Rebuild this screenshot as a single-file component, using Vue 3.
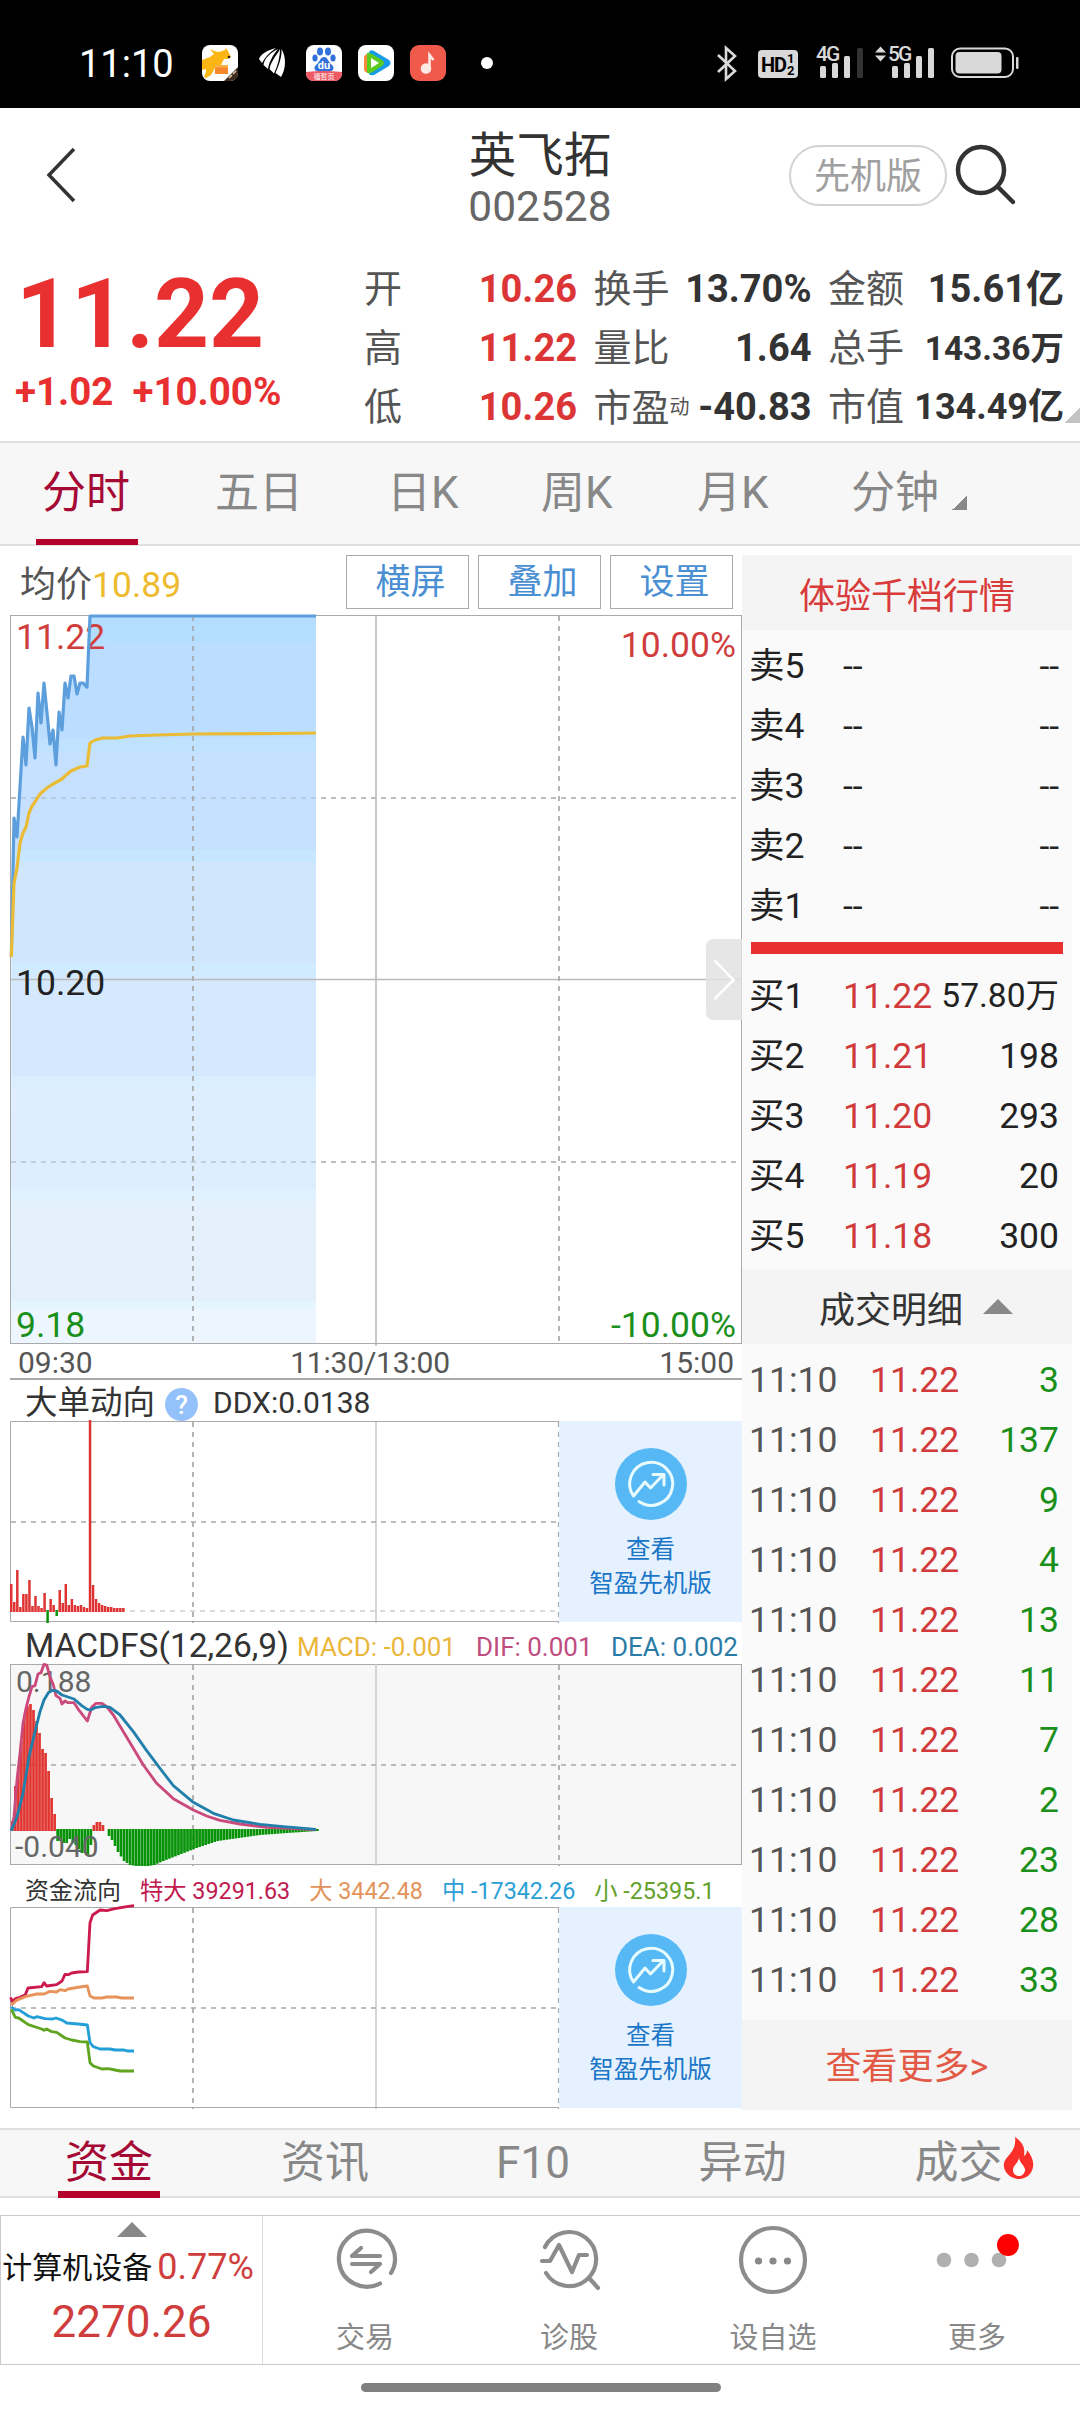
<script setup>
import { computed } from 'vue';

// Header figures, three columns of label / value
const stats = [
    { label: '开', value: '10.26', tone: 'up' },
    { label: '换手', value: '13.70%' },
    { label: '金额', value: '15.61亿' },
    { label: '高', value: '11.22', tone: 'up' },
    { label: '量比', value: '1.64' },
    { label: '总手', value: '143.36万', size: 'small' },
    { label: '低', value: '10.26', tone: 'up' },
    { label: '市盈', sup: '动', value: '-40.83' },
    { label: '市值', value: '134.49亿', size: 'mid' },
];

const periods = ['分时', '五日', '日K', '周K', '月K', '分钟'];
const tools = ['横屏', '叠加', '设置'];

const sells = ['卖5', '卖4', '卖3', '卖2', '卖1'];
const buys = [
    { label: '买1', price: '11.22', volume: '57.80万' },
    { label: '买2', price: '11.21', volume: '198' },
    { label: '买3', price: '11.20', volume: '293' },
    { label: '买4', price: '11.19', volume: '20' },
    { label: '买5', price: '11.18', volume: '300' },
];
const trades = [3, 137, 9, 4, 13, 11, 7, 2, 23, 28, 33];

const infoTabs = ['资金', '资讯', 'F10', '异动', '成交'];

// Price area: x / y pairs in chart pixels
const priceLine = '11.3,957 14,818 17,837 20,787 23,737 26,765 29,708 32,727 35,758 38,693 41,723 44,683 47,713 50,744 53,730 56,765 59,712 62,730 65,683 68,698 71,676 74,676 77,694 80,683 83,683 87,687 90,616 316,616';
const averageLine = '11.3,957 14,883 17,868 20,843 23,833 26,827 29,813 32,806 35,802 38,797 41,793 47,788 53,784 62,779 65,776 71,771 80,767 87,766 90,743 95,740 103,738 117,738 130,736 157,735 193,734 280,733.5 316,733';
const priceArea = computed(() => `${priceLine} 316,1343 11,1343`);

const bands = [
    { y: 616, color: '#b4deff' },
    { y: 642, color: '#bbddff' },
    { y: 738, color: '#bfe3ff' },
    { y: 752, color: '#c5e1ff' },
    { y: 850, color: '#c6e7ff' },
    { y: 862, color: '#d0e6fd' },
    { y: 963, color: '#d0eaff' },
    { y: 975, color: '#d5e9fe' },
    { y: 1076, color: '#d9efff' },
    { y: 1088, color: '#deeefe' },
    { y: 1189, color: '#e0f2ff' },
    { y: 1201, color: '#e4f1fd' },
    { y: 1301, color: '#e6f6ff' },
    { y: 1309, color: '#edf6ff' },
    { y: 1343, color: '#edf6ff' },
];
const bandRects = computed(() => bands.slice(0, -1).map((b, i) => ({ ...b, height: bands[i + 1].y - b.y })));

// Big order bars, one per minute
const ddx = [28, 10, 42, 5, 18, 18, 32, 6, 16, 6, 4, 19, -11, 13, 7, -4, 22, 9, 28, 7, 13, 7, 6, 7, 5, 4, 192, 27, 13, 9, 7, 6, 5, 5, 4, 4, 4, 4];

// MACD histogram: opening minutes are listed, the long green tail is interpolated
const macdHead = [10, 45, 65, 90, 116, 125, 127, 121, 110, 98, 82, 78, 60, 33, 17, -12, -12, -14, -14, -10, -14, -16, -20, -24, -24, -26, -16, 6, 9, 9, 6, 0];
const macdTail = [[32, -7], [33, -11], [35, -23], [37, -32], [39, -36], [41, -37], [45, -37], [47, -36], [50, -32], [56, -25], [61, -19], [68, -12], [75, -9], [82, -6], [91, -4], [101, -2]];

const interpolate = (points, x) => {
    const i = Math.max(points.findIndex((p) => p[0] >= x), 1);
    const [x0, y0] = points[i - 1];
    const [x1, y1] = points[i];
    return y0 + ((y1 - y0) * (x - x0)) / (x1 - x0);
};

const macdBars = computed(() => {
    const bars = [...macdHead];
    for (let m = 32; m <= 101; m++) {
        bars.push(interpolate(macdTail, m));
    }
    return bars.map((v, i) => ({ x: 11 + i * 3.02, v }));
});

// Lines below are sampled at three units per pixel
const dif = '34,632 42,590 51,480 60,400 69,310 78,265 87,230 96,200 105,197 114,162 123,158 132,133 140,135 150,170 160,195 168,227 180,235 186,252 195,243 204,248 222,248 235,268 262,303 275,262 288,250 306,250 320,260 340,285 400,385 430,435 470,490 520,536 580,570 620,588 660,601 720,612 800,622 948,629';
const dea = '34,632 51,590 69,520 87,410 105,335 120,275 132,240 145,218 157,211 170,213 186,225 222,237 245,257 262,268 272,270 285,263 310,259 330,262 360,285 400,335 440,392 480,445 520,497 580,547 640,580 700,600 780,613 850,620 948,628';

const flows = [
    { color: '#cc1a4f', points: '32,412 36,424 48,415 60,412 76,404 84,384 125,380 132,368 140,378 170,374 186,363 195,343 205,344 215,339 235,336 262,335 270,188 278,165 300,150 320,152 345,146 385,139 402,137' },
    { color: '#e8935a', points: '34,436 48,422 76,410 110,402 132,402 150,394 170,396 180,389 195,392 204,387 240,381 262,378 270,408 282,414 306,414 320,411 350,411 365,414 402,414' },
    { color: '#239fd8', points: '34,440 44,450 56,449 85,468 102,474 110,470 135,476 158,477 168,474 188,481 200,489 235,492 262,495 270,548 280,560 300,567 330,567 345,570 370,570 382,573 402,573' },
    { color: '#5fa51f', points: '34,448 46,472 56,474 85,494 125,507 132,511 140,507 155,515 170,517 195,534 215,540 240,545 262,546 270,608 280,618 306,627 325,626 345,630 360,633 402,633' },
];
</script>

<template>
    <div class="page">
        <!-- System status bar -->
        <div class="status">
            <span class="clock">11:10</span>
            <svg class="app-icon" viewBox="0 0 36 36">
                <rect width="36" height="36" rx="8" fill="#fff" />
                <path d="M8 4q6 3 9 3l6-2 1-2 2 3 3 6-3 2-4 0-3 6 2 3H13l-4 7-5 3-2-1 2-5 0-3-4 1V15l8-3 4-3z" fill="#fbb615" />
                <rect x="13" y="21" width="13" height="8" fill="#f5892b" />
                <rect x="13" y="20" width="13" height="2.500" fill="#fbb040" />
                <circle cx="27" cy="12" r="1.300" fill="#222" />
                <path d="M36 22v6q0 8-8 8h-6z" fill="#3f2a20" />
                <path d="M27 33l3-3M31 29l3-3" stroke="#d8c8a8" stroke-width="1.600" />
            </svg>
            <svg class="app-icon" viewBox="0 0 36 36">
                <g fill="#fff">
                    <path d="M22 3C13 5 6 10 5 14L8 18C11 12 16 7 22 3z" />
                    <path d="M24 4C16 8 10 14 9.500 20L14 24C15 17 19 10 24 4z" />
                    <path d="M26 4C23 10 17 16 15.500 24L20 28.500C24 20 26 12 26 4z" />
                    <path d="M27.500 4C28 12 25 20 21.500 28L27 32C32 24 32.500 12 27.500 4z" />
                </g>
            </svg>
            <svg class="app-icon" viewBox="0 0 36 36">
                <rect width="36" height="36" rx="8" fill="#fff" />
                <g fill="#3270db">
                    <ellipse cx="14" cy="6.500" rx="3" ry="4" />
                    <ellipse cx="22" cy="6.500" rx="3" ry="4" />
                    <ellipse cx="9" cy="13" rx="2.600" ry="3.600" />
                    <ellipse cx="27" cy="13" rx="2.600" ry="3.600" />
                    <path d="M18 12c4 0 4 5 8 8 4 4 0 8-8 7-8 1-12-3-8-7 4-3 4-8 8-8z" />
                </g>
                <text x="18" y="24" class="du">du</text>
                <path d="M0 27q18-2 36 0v1q0 8-8 8H8q-8 0-8-8z" fill="#ee5a63" />
                <text x="18" y="34" class="promo">福哲页</text>
            </svg>
            <svg class="app-icon" viewBox="0 0 36 36">
                <rect width="36" height="36" rx="8" fill="#fff" />
                <path d="M11 7q1-3 5-1l15 9q3 3 0 6l-15 9q-4 1-5-1z" fill="#169be8" />
                <path d="M6 12q1-3 4-3v19q-4-1-4-4z" fill="#f9873c" />
                <path d="M9 8q1-1 5 1l10 6q4 3 0 6l-11 7q-4 1-4-1z" fill="#5bcb1f" />
                <path d="M13 13l8 5-8 5z" fill="#fff" />
            </svg>
            <svg class="app-icon" viewBox="0 0 36 36">
                <rect width="36" height="36" rx="9" fill="#ef5a4b" />
                <circle cx="16" cy="23.500" r="5.300" fill="#ffe9e4" />
                <path d="M19.500 24V10l4 5" fill="none" stroke="#ffe9e4" stroke-width="2.600" />
            </svg>
            <i class="more-dot"></i>
            <svg class="signals" viewBox="712 44 308 38">
                <path d="M718 55l17 16-9 8V48l9 8-17 16" fill="none" stroke="#d9d9d9" stroke-width="2.600" />
                <rect x="758" y="50" width="40" height="28" rx="4" fill="#d9d9d9" />
                <text x="761" y="72" class="hd">HD</text>
                <text x="787" y="63" class="hd-sub">1</text>
                <text x="787" y="75" class="hd-sub">2</text>
                <g fill="#d9d9d9">
                    <text x="816" y="61" class="net">4G</text>
                    <text x="888" y="61" class="net">5G</text>
                    <rect x="820" y="66" width="6" height="12" rx="1.500" />
                    <rect x="832" y="63" width="6" height="15" rx="1.500" />
                    <rect x="844" y="56" width="6" height="22" rx="1.500" />
                    <rect x="857" y="48" width="6" height="30" rx="1.500" fill="#333" />
                    <path d="M875 52.500l5.500-6 5.500 6zM875 55.500l5.500 6 5.500-6z" />
                    <rect x="892" y="66" width="6" height="12" rx="1.500" />
                    <rect x="904" y="63" width="6" height="15" rx="1.500" />
                    <rect x="916" y="56" width="6" height="22" rx="1.500" />
                    <rect x="928" y="48" width="6" height="30" rx="1.500" />
                    <rect x="955.500" y="52" width="46" height="21.500" rx="4" />
                    <rect x="1016" y="57" width="2.500" height="12" rx="1" />
                </g>
                <rect x="952" y="48.500" width="61" height="28.500" rx="8" fill="none" stroke="#d9d9d9" stroke-width="2" />
            </svg>
        </div>

        <!-- Title bar -->
        <header class="header">
            <svg class="back" viewBox="0 0 32 60">
                <path d="M29 4L4 30l25 26" />
            </svg>
            <div class="stock">
                <div class="stock-name">英飞拓</div>
                <div class="stock-code">002528</div>
            </div>
            <div class="header-right">
                <span class="pill">先机版</span>
                <svg class="search" viewBox="0 0 60 60">
                    <circle cx="25" cy="25" r="23" />
                    <path d="M42 42l15 15" />
                </svg>
            </div>
        </header>

        <!-- Quote summary -->
        <section class="quote">
            <div class="quote-main">
                <div class="price">11.22</div>
                <div class="change"><span>+1.02</span><span>+10.00%</span></div>
            </div>
            <div class="stats">
                <div v-for="(s, i) in stats" :key="i" class="stat">
                    <span class="stat-label">{{ s.label }}<small v-if="s.sup">{{ s.sup }}</small></span>
                    <span class="stat-value" :class="[s.tone, s.size]">{{ s.value }}</span>
                </div>
            </div>
            <i class="corner"></i>
        </section>

        <nav class="periods">
            <span v-for="(p, i) in periods" :key="p" class="period" :class="['period--' + i, { active: i === 0 }]">{{ p }}</span>
            <i class="corner-mark"></i>
        </nav>

        <main class="main">
            <div class="charts">
                <div class="toolbar">
                    <span class="avg">均价<b>10.89</b></span>
                    <span v-for="t in tools" :key="t" class="tool">{{ t }}</span>
                </div>

                <svg class="chart-main" viewBox="0 612 742 736">
                    <clipPath id="area">
                        <polygon :points="priceArea" />
                    </clipPath>
                    <path d="M11 798H741M11 1162H741" class="dash" />
                    <path d="M11 979.500H741M376 615V1346" class="axis" />
                    <g clip-path="url(#area)">
                        <rect v-for="b in bandRects" :key="b.y" x="11" :y="b.y" width="305" :height="b.height" :fill="b.color" />
                        <path d="M11 798H316M11 1162H316" class="dash faint" />
                        <path d="M11 979.500H316" class="axis" />
                    </g>
                    <path d="M193 616V1343M559 616V1343" class="dash" />
                    <rect x="10.500" y="615.500" width="731" height="728" class="frame" />
                    <text x="16" y="649" class="tick up">11.22</text>
                    <text x="736" y="657" class="tick up end">10.00%</text>
                    <text x="16" y="995" class="tick">10.20</text>
                    <text x="16" y="1337" class="tick down">9.18</text>
                    <text x="736" y="1337" class="tick down end">-10.00%</text>
                    <polyline :points="priceLine" class="line price-line" />
                    <polyline :points="averageLine" class="line avg-line" />
                    <path d="M742 939H714q-8 0-8 8v65q0 8 8 8h28z" class="handle" />
                    <path d="M715 961l18.500 19L715 998.500" class="handle-arrow" />
                </svg>
                <div class="times"><span>09:30</span><span class="noon">11:30/13:00</span><span>15:00</span></div>

                <div class="caption caption--ddx">
                    <span class="cap-title">大单动向</span>
                    <i class="help">?</i>
                    <span class="cap-ddx">DDX:0.0138</span>
                </div>
                <div class="panel">
                    <svg class="plot" viewBox="0 1418 559 208">
                        <path d="M376 1421V1623" class="axis light" />
                        <path d="M11 1522H559M193 1422V1623" class="dash" />
                        <path d="M130 1611H559" class="dash pale" />
                        <path d="M559 1421.500H10.500V1621.500H559" class="frame" />
                        <path d="M558.500 1422V1623" class="dash long" />
                        <rect v-for="(v, i) in ddx" :key="i" :x="10 + i * 3.030" :y="v > 0 ? 1612 - v : 1610" width="2.500" :height="Math.abs(v) + (v > 0 ? 0 : 2)" :fill="v > 0 ? '#dd3333' : '#0a930a'" />
                    </svg>
                    <div class="cta">
                        <svg viewBox="0 0 72 72">
                            <circle cx="36" cy="36" r="36" class="cta-disc" />
                            <path d="M18.500 48A21.500 21.500 0 1 1 24 53.500M18.500 48L30 34l5.500 6L48 27M38 26.500h11v10.500" class="cta-glyph" />
                        </svg>
                        <span>查看</span>
                        <span>智盈先机版</span>
                    </div>
                </div>

                <div class="caption caption--macd">
                    <span class="cap-macd">MACDFS(12,26,9)</span>
                    <span class="c-macd">MACD: -0.001</span>
                    <span class="c-dif">DIF: 0.001</span>
                    <span class="c-dea">DEA: 0.002</span>
                </div>
                <svg class="plot wide" viewBox="0 1660 742 209">
                    <rect x="10.500" y="1664.500" width="731" height="200" class="frame shaded" />
                    <path d="M376 1664V1866" class="axis light" />
                    <path d="M11 1765H741M193 1665V1866M559 1665V1866" class="dash" />
                    <rect v-for="(b, i) in macdBars" :key="i" :x="b.x" :y="b.v > 0 ? 1831 - b.v : 1829" width="2.700" :height="Math.abs(b.v)" :fill="b.v > 0 ? '#e03530' : '#079307'" />
                    <text x="16" y="1692" class="tick gray">0.188</text>
                    <text x="15" y="1857" class="tick gray">-0.040</text>
                    <g transform="translate(0 1620) scale(0.33333)" class="fine">
                        <polyline :points="dif" stroke="#cb4a7c" />
                        <polyline :points="dea" stroke="#207fab" />
                    </g>
                </svg>

                <div class="caption caption--flow">
                    <span class="f-title">资金流向</span>
                    <span class="f-xl">特大 39291.63</span>
                    <span class="f-l">大 3442.48</span>
                    <span class="f-m">中 -17342.26</span>
                    <span class="f-s">小 -25395.1</span>
                </div>
                <div class="panel">
                    <svg class="plot" viewBox="0 1904 559 208">
                        <path d="M376 1907V2109" class="axis light" />
                        <path d="M11 2008H559M193 1908V2109" class="dash" />
                        <path d="M559 1907.500H10.500V2107.500H559" class="frame" />
                        <path d="M558.500 1908V2109" class="dash long" />
                        <g transform="translate(0 1860) scale(0.33333)" class="fine">
                            <polyline v-for="f in flows" :key="f.color" :points="f.points" :stroke="f.color" />
                        </g>
                    </svg>
                    <div class="cta">
                        <svg viewBox="0 0 72 72">
                            <circle cx="36" cy="36" r="36" class="cta-disc" />
                            <path d="M18.500 48A21.500 21.500 0 1 1 24 53.500M18.500 48L30 34l5.500 6L48 27M38 26.500h11v10.500" class="cta-glyph" />
                        </svg>
                        <span>查看</span>
                        <span>智盈先机版</span>
                    </div>
                </div>
            </div>

            <!-- Order book -->
            <aside class="book">
                <div class="book-head promo-head">体验千档行情</div>
                <div class="rows">
                    <div v-for="s in sells" :key="s" class="row">
                        <span>{{ s }}</span><span class="empty">--</span><span class="qty">--</span>
                    </div>
                </div>
                <div class="ratio"></div>
                <div class="rows">
                    <div v-for="b in buys" :key="b.label" class="row">
                        <span>{{ b.label }}</span><span class="row-price">{{ b.price }}</span>
                        <span class="qty" :class="{ long: b.volume.length > 5 }">{{ b.volume }}</span>
                    </div>
                </div>
                <div class="book-head detail-head">成交明细<i class="tri"></i></div>
                <div class="rows rows--trades">
                    <div v-for="(q, i) in trades" :key="i" class="row trade">
                        <span>11:10</span><span class="row-price">11.22</span><span class="qty">{{ q }}</span>
                    </div>
                </div>
                <div class="book-more">查看更多&gt;</div>
            </aside>
        </main>

        <nav class="info-tabs">
            <span v-for="(t, i) in infoTabs" :key="t" class="info-tab" :class="{ active: i === 0, hot: i === 4 }">
                {{ t }}
                <svg v-if="i === 4" class="flame" viewBox="0 0 30 42">
                    <path d="M11 0c9 6 10 12 9 19 2-1 3-4 3-6 5 6 7 12 6 17-1 7-7 12-14 12S1 37 0 30c-1-6 3-9 6-13 4-5 6-10 5-17z" fill="#fb2f2a" />
                    <path d="M15 20c0 6 7 9 6 14-1 3-3 5-6 5s-6-2-6-6c0-5 6-7 6-13z" fill="#fff" />
                </svg>
            </span>
        </nav>

        <footer class="bottom">
            <div class="sector">
                <i class="tri"></i>
                <div class="sector-line"><span>计算机设备</span><b>0.77%</b></div>
                <div class="sector-index">2270.26</div>
            </div>
            <div class="action">
                <svg viewBox="0 0 76 76">
                    <path d="M64 51A28 28 0 1 0 53 61.500" />
                    <path d="M25 34h28M25 34l9-8M53 42H25M53 42l-9 8" />
                </svg>
                <span>交易</span>
            </div>
            <div class="action">
                <svg viewBox="0 0 76 76">
                    <path d="M14 25A27 27 0 1 1 15 51" />
                    <path d="M11 39h8l9-16 13 27 7-17h8M59 57l8 9" />
                </svg>
                <span>诊股</span>
            </div>
            <div class="action">
                <svg viewBox="0 0 76 76">
                    <circle cx="38" cy="38" r="32" />
                    <g class="solid">
                        <circle cx="23.500" cy="39" r="3.600" />
                        <circle cx="38" cy="39" r="3.600" />
                        <circle cx="52.500" cy="39" r="3.600" />
                    </g>
                </svg>
                <span>设自选</span>
            </div>
            <div class="action">
                <svg viewBox="0 0 76 76">
                    <g class="solid pale">
                        <circle cx="5" cy="38" r="7.300" />
                        <circle cx="32.500" cy="38" r="7.300" />
                        <circle cx="60" cy="38" r="7.300" />
                    </g>
                    <circle cx="69" cy="23" r="11" class="badge" />
                </svg>
                <span>更多</span>
            </div>
        </footer>
        <div class="home-bar"></div>
    </div>
</template>

<style>
body {
    margin: 0;
    background: #fff;
}
</style>

<style scoped>
.page {
    width: 1080px;
    height: 2412px;
    overflow: hidden;
    background: #fff;
    font-family: Roboto, "Noto Sans CJK SC", sans-serif;
    color: #333;
    white-space: nowrap;
}

i,
b {
    font-style: normal;
    font-weight: 400;
}

svg {
    display: block;
    overflow: visible;
    flex: none;
}

/* Status bar */
.status {
    display: flex;
    align-items: center;
    height: 108px;
    padding: 18px 60px 0 79px;
    box-sizing: border-box;
    background: #000;
}

.clock {
    width: 123px;
    padding-top: 2px;
    font-size: 38px;
    line-height: 44px;
    color: #fff;
}

.app-icon {
    width: 36px;
    height: 36px;
    margin-right: 16px;
}

.du {
    font-size: 11px;
    font-weight: 700;
    fill: #fff;
    text-anchor: middle;
}

.promo {
    font-size: 7px;
    fill: #fff;
    text-anchor: middle;
}

.more-dot {
    width: 12px;
    height: 12px;
    margin-left: 19px;
    border-radius: 50%;
    background: #fff;
}

.signals {
    width: 308px;
    height: 38px;
    margin-left: auto;
}

.hd {
    font-size: 20px;
    font-weight: 700;
    letter-spacing: -1px;
    fill: #000;
}

.hd-sub {
    font-size: 13px;
    font-weight: 700;
    fill: #000;
}

.net {
    font-size: 21px;
    font-weight: 500;
    letter-spacing: -2px;
}

/* Title bar */
.header {
    display: grid;
    grid-template-columns: 1fr auto 1fr;
    align-items: start;
    height: 134px;
    padding: 0 64px 0 45px;
}

.back {
    width: 32px;
    height: 60px;
    margin-top: 37px;
    fill: none;
    stroke: #333;
    stroke-width: 3.500;
}

.stock {
    padding: 20px 0 0 19px;
    text-align: center;
}

.stock-name {
    font-size: 47.500px;
    line-height: 56px;
}

.stock-code {
    font-size: 42.500px;
    line-height: 46px;
    color: #666;
}

.header-right {
    display: flex;
    justify-content: flex-end;
    margin-top: 37px;
}

.pill {
    width: 154px;
    height: 57px;
    margin-right: 9px;
    border: 2px solid #d2d2d2;
    border-radius: 31px;
    font-size: 36px;
    line-height: 60px;
    text-align: center;
    color: #a0a0a0;
}

.search {
    width: 60px;
    height: 60px;
    fill: none;
    stroke: #333;
    stroke-width: 4.500;
    stroke-linecap: round;
}

/* Quote summary */
.quote {
    position: relative;
    display: flex;
    height: 199px;
}

.quote-main {
    width: 364px;
    color: #e83030;
}

.price {
    padding: 17px 0 0 16px;
    font-size: 96px;
    font-weight: 700;
    line-height: 110px;
}

.change {
    display: flex;
    gap: 19px;
    padding: 0 0 0 15px;
    font-size: 38.500px;
    font-weight: 700;
    line-height: 46px;
}

.stats {
    display: grid;
    grid-template-columns: 213px 218px 236px;
    grid-auto-rows: 59px;
    column-gap: 16.500px;
    padding-top: 18px;
}

.stat {
    display: flex;
    justify-content: space-between;
    line-height: 59px;
}

.stat-label {
    font-size: 38px;
    color: #555;
}

.stat-label small {
    font-size: 20px;
    vertical-align: 7px;
}

.stat-value {
    font-size: 38px;
    font-weight: 700;
}

.stat-value.mid {
    font-size: 36px;
}

.stat-value.small {
    font-size: 33.500px;
}

.stat-value.up {
    color: #dc3535;
}

.corner {
    position: absolute;
    right: 0;
    bottom: 18px;
    width: 15px;
    height: 15px;
    background: linear-gradient(135deg, transparent 50%, #c4c4c4 50%);
}

/* Period tabs */
.periods {
    display: flex;
    box-sizing: border-box;
    height: 105px;
    padding-left: 36px;
    border-top: 2px solid #e0e0e0;
    border-bottom: 2px solid #e0e0e0;
    background: #f7f7f7;
}

.period {
    box-sizing: border-box;
    height: 102px;
    padding-left: 7px;
    font-size: 44px;
    line-height: 100px;
    color: #888;
}

.period--0 {
    width: 172px;
}

.period--1 {
    width: 172px;
}

.period--2 {
    width: 154px;
}

.period--3 {
    width: 156px;
}

.period--4 {
    width: 154px;
}

.period.active {
    width: 102px;
    margin-right: 70px;
    padding-left: 6px;
    border-bottom: 6px solid #b5002c;
    border-radius: 4px 4px 0 0;
    color: #a50a35;
}

.corner-mark {
    width: 15px;
    height: 15px;
    margin: 52px 0 0 13px;
    background: linear-gradient(135deg, transparent 50%, #888 50%);
}

/* Charts column */
.main {
    display: flex;
    height: 1582px;
}

.charts {
    width: 742px;
}

.toolbar {
    display: flex;
    align-items: center;
    height: 66px;
    padding-bottom: 3px;
    margin-bottom: -3px;
    box-sizing: border-box;
}

.avg {
    width: 326px;
    padding: 14px 0 0 20px;
    font-size: 36px;
    line-height: 44px;
    color: #555;
}

.avg b {
    font-size: 35.500px;
    color: #eebb2e;
}

.tool {
    box-sizing: border-box;
    width: 123px;
    height: 54px;
    margin: 9px 9px 0 0;
    padding-left: 6px;
    border: 1px solid #aaa;
    font-size: 35px;
    line-height: 54px;
    text-align: center;
    color: #4b8fd3;
}

.chart-main {
    width: 742px;
    height: 736px;
    margin-top: 3px;
}

.frame {
    fill: none;
    stroke: #aaa;
    stroke-width: 1;
}

.shaded {
    fill: #f7f7f7;
}

.axis {
    stroke: #bbb;
    stroke-width: 1.600;
}

.axis.light {
    stroke: #ccc;
}

.dash {
    fill: none;
    stroke: #a8a8a8;
    stroke-width: 1.700;
    stroke-dasharray: 5 5;
}

.dash.faint {
    stroke: #b3c4d6;
}

.dash.pale {
    stroke: #d0d0d0;
}

.dash.long {
    stroke-width: 1.200;
}

.line {
    fill: none;
    stroke-linejoin: round;
}

.price-line {
    stroke: #5d9fdd;
    stroke-width: 3.200;
}

.avg-line {
    stroke: #eabb35;
    stroke-width: 3.200;
}

.tick {
    font-size: 35.500px;
    fill: #222;
}

.tick.end {
    text-anchor: end;
}

.tick.up {
    fill: #cf3d3d;
}

.tick.down {
    fill: #1a8f1a;
}

.tick.gray {
    font-size: 30px;
    fill: #666;
}

.handle {
    fill: #e2e2e2;
    opacity: 0.85;
}

.handle-arrow {
    fill: none;
    stroke: #fff;
    stroke-width: 2.500;
    stroke-linecap: round;
}

.times {
    display: flex;
    justify-content: space-between;
    height: 30px;
    margin-left: 10px;
    padding: 0 8px;
    border-bottom: 2px solid #aaa;
    font-size: 30px;
    line-height: 30px;
    color: #555;
}

.noon {
    padding-right: 12px;
    letter-spacing: -0.200px;
}

.caption {
    display: flex;
    box-sizing: border-box;
    padding-left: 25px;
}

.caption--ddx {
    height: 38px;
    align-items: center;
    padding-top: 7px;
    line-height: 30px;
}

.cap-title {
    font-size: 32.500px;
}

.help {
    width: 33px;
    height: 33px;
    margin: 3px 15px 0 10px;
    border-radius: 50%;
    background: #95c1fb;
    font-size: 26px;
    font-weight: 500;
    line-height: 34px;
    text-align: center;
    color: #fff;
}

.cap-ddx {
    font-size: 30px;
}

.panel {
    display: flex;
    height: 208px;
}

.plot {
    width: 559px;
    height: 208px;
}

.plot.wide {
    width: 742px;
    height: 209px;
}

.fine {
    fill: none;
    stroke-width: 8.500;
    stroke-linejoin: round;
}

.cta {
    display: flex;
    flex-direction: column;
    align-items: center;
    box-sizing: border-box;
    width: 183px;
    height: 201px;
    margin-top: 3px;
    padding-top: 27px;
    background: #e5f1fe;
    font-size: 24.500px;
    line-height: 34px;
    color: #1a76c8;
}

.cta svg {
    width: 72px;
    height: 72px;
    margin-bottom: 13px;
}

.cta-disc {
    fill: #56b8f5;
}

.cta-glyph {
    fill: none;
    stroke: #e8fcff;
    stroke-width: 3;
    stroke-linecap: round;
    stroke-linejoin: round;
}

.caption--macd {
    height: 34px;
    padding-top: 4px;
    font-size: 26px;
    line-height: 34px;
}

.cap-macd {
    width: 272px;
    font-size: 33.500px;
    line-height: 32px;
}

.c-macd {
    width: 179px;
    color: #eab63c;
}

.c-dif {
    width: 135px;
    color: #bf4d80;
}

.c-dea {
    color: #2a7ba6;
}

.caption--flow {
    gap: 19px;
    height: 35px;
    padding-top: 5px;
    font-size: 23.300px;
    line-height: 34px;
}

.f-title {
    font-size: 24px;
}

.f-xl {
    color: #bf1a50;
}

.f-l {
    color: #e3935a;
}

.f-m {
    color: #2a9fd6;
}

.f-s {
    color: #62a02a;
}

/* Order book */
.book {
    width: 330px;
    height: 1555px;
    margin-top: 9px;
    background: #fafafa;
}

.book-head {
    display: flex;
    align-items: center;
    justify-content: center;
    box-sizing: border-box;
    height: 75px;
    font-size: 36px;
    background: #f4f4f4;
}

.promo-head {
    color: #d93a3a;
}

.rows {
    padding: 6px 13px 0 7px;
}

.row {
    display: grid;
    grid-template-columns: 94px 110px minmax(0, 1fr);
    height: 60px;
    font-size: 35.500px;
    line-height: 60px;
    color: #222;
}

.row-price {
    color: #d03a3a;
}

.qty {
    display: flex;
    justify-content: flex-end;
}

.qty.long {
    font-size: 33.500px;
}

.ratio {
    width: 312px;
    height: 12px;
    margin: 6px 0 6px 9px;
    background: #e83030;
}

.ratio + .rows {
    height: 303px;
}

.detail-head {
    gap: 20px;
    padding-left: 18px;
}

.tri {
    border: 15px solid transparent;
    border-top: 0;
    border-bottom: 15px solid #888;
}

.rows--trades {
    height: 670px;
}

.trade {
    grid-template-columns: 121px 100px minmax(0, 1fr);
    color: #555;
}

.trade .qty {
    color: #1a8f1a;
}

.book-more {
    height: 90px;
    background: #f4f4f4;
    font-size: 36px;
    line-height: 94px;
    text-align: center;
    color: #e25a45;
}

/* Info tabs */
.info-tabs {
    display: grid;
    grid-template-columns: 218px 214px 202px 217px 229px;
    box-sizing: border-box;
    height: 70px;
    border-top: 2px solid #e0e0e0;
    border-bottom: 2px solid #e0e0e0;
    background: #f7f7f7;
}

.info-tab {
    justify-self: center;
    display: flex;
    justify-content: center;
    box-sizing: border-box;
    width: 102px;
    height: 68px;
    font-size: 44px;
    line-height: 66px;
    color: #888;
}

.info-tab.active {
    border-bottom: 7px solid #b5002c;
    border-radius: 4px 4px 0 0;
    color: #a50a35;
}

.info-tab.hot {
    justify-content: flex-start;
}

.flame {
    width: 30px;
    height: 42px;
    margin: 7px 0 0 1px;
}

/* Bottom bar */
.bottom {
    display: grid;
    grid-template-columns: 262px repeat(4, 204px);
    box-sizing: border-box;
    height: 150px;
    margin-top: 17px;
    border-top: 1px solid #ccc;
    border-bottom: 1px solid #ccc;
    border-left: 1px solid #ccc;
}

.sector {
    display: flex;
    flex-direction: column;
    align-items: center;
    padding-top: 6px;
    border-right: 1px solid #ddd;
}

.sector-line {
    display: flex;
    align-items: center;
    gap: 5px;
    height: 54px;
    padding: 6px 7px 0 0;
    box-sizing: border-box;
    font-size: 30px;
    line-height: 48px;
    color: #111;
}

.sector-line span {
    padding-top: 2px;
}

.sector-line b {
    font-size: 36px;
    color: #cf3d3d;
}

.sector-index {
    font-size: 44px;
    line-height: 62px;
    color: #cf3d3d;
}

.action {
    display: flex;
    flex-direction: column;
    align-items: center;
    padding-top: 6px;
    font-size: 29px;
    line-height: 40px;
    color: #888;
}

.action svg {
    width: 76px;
    height: 76px;
    margin-bottom: 20px;
    fill: none;
    stroke: #8c8c8c;
    stroke-width: 4.200;
    stroke-linecap: round;
    stroke-linejoin: round;
}

.action .solid {
    fill: #888;
    stroke: none;
}

.action .pale {
    fill: #b0b0b0;
}

.action .badge {
    fill: #f00;
    stroke: none;
}

.home-bar {
    width: 360px;
    height: 9px;
    margin: 18px 0 0 361px;
    border-radius: 5px;
    background: #808080;
}
</style>
